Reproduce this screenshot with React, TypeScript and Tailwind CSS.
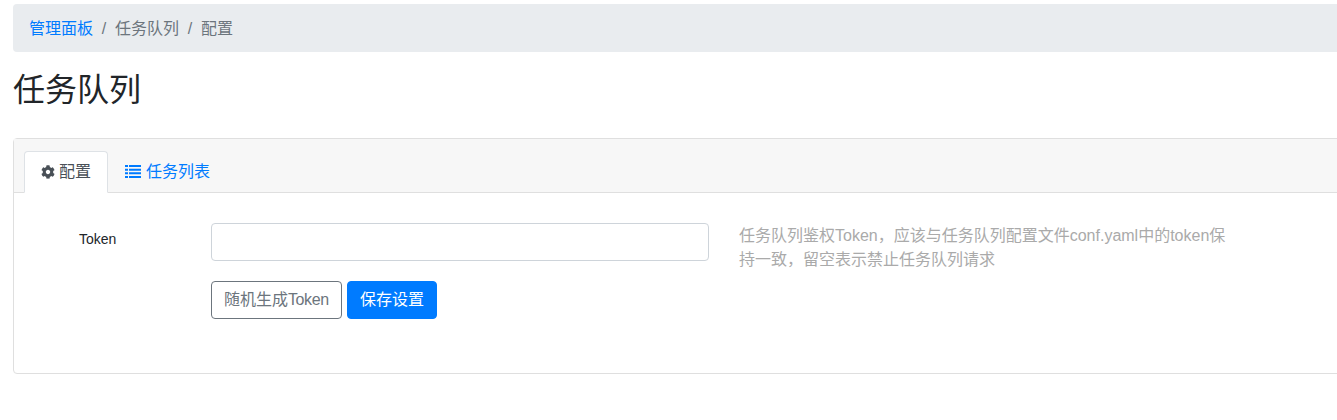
import React from 'react';
import { FaCog } from 'react-icons/fa';

const font = "font-['Liberation_Sans','Noto_Sans_CJK_SC',sans-serif]";

function ListIcon() {
  return (
    <svg className="mt-[-1px] h-[13px] w-[16px]" viewBox="0 0 16 13" fill="currentColor">
      <path d="M0 0h3v2H0zM4 0h12v2H4zM0 3.67h3v2H0zM4 3.67h12v2H4zM0 7.33h3v2H0zM4 7.33h12v2H4zM0 11h3v2H0zM4 11h12v2H4z" />
    </svg>
  );
}

export default function App() {
  return (
    <div className={`h-[420px] w-[1337px] overflow-hidden bg-white text-[16px] leading-6 text-[#212529] ${font}`}>
      <div className="ml-[13px] w-[1400px] pt-[4px]">
        {/* Breadcrumb */}
        <nav className="flex h-[48px] items-center rounded-l-[4px] bg-[#e9ecef] px-4 pt-[2px]">
          <a className="text-[#007bff]">管理面板</a>
          <span className="w-[22px] text-center text-[#6c757d]">/</span>
          <span className="text-[#6c757d]">任务队列</span>
          <span className="w-[22px] text-center text-[#6c757d]">/</span>
          <span className="text-[#6c757d]">配置</span>
        </nav>

        <h1 className="mt-[19px] text-[32px] leading-[38px] font-normal">任务队列</h1>

        {/* Card */}
        <div className="mt-[29px] h-[236px] rounded-l-[4px] border border-[#dfdfdf]">
          <div className="flex h-[54px] items-end border-b border-[#dfdfdf] bg-[#f7f7f7] pl-[10px]">
            <div className="-mb-px flex h-[42px] w-[84px] items-center justify-center gap-1 rounded-t-[4px] border border-[#dee2e6] border-b-white bg-white text-[#495057]">
              <FaCog className="h-[14px] w-[14px]" />
              <span>配置</span>
            </div>
            <div className="-mb-px flex h-[42px] items-center gap-[5px] pl-[17px] text-[#007bff]">
              <ListIcon />
              <span>任务列表</span>
            </div>
          </div>

          <div className="flex pt-[30px]">
            <label className="w-[197px] pt-[4px] pl-[65px] text-[14px] leading-6">Token</label>
            <div className="w-[498px]">
              <input className="block h-[38px] w-full rounded-[4px] border border-[#ced4da] bg-white px-3" />
              <div className="mt-5 flex gap-[5px]">
                <button className="h-[38px] w-[131px] whitespace-nowrap rounded-[4px] border border-[#6c757d] pl-3 text-left text-[#6c757d]">
                  随机生成<span className="tracking-[-0.4px]">Token</span>
                </button>
                <button className="h-[38px] rounded-[4px] border border-[#007bff] bg-[#007bff] px-3 text-white">保存设置</button>
              </div>
            </div>
            <p className="ml-[30px] w-[490px] pt-px text-[#aaaaaa]">
              任务队列鉴权Token，应该与任务队列配置文件conf.yaml中的token保持一致，留空表示禁止任务队列请求
            </p>
          </div>
        </div>
      </div>
    </div>
  );
}
